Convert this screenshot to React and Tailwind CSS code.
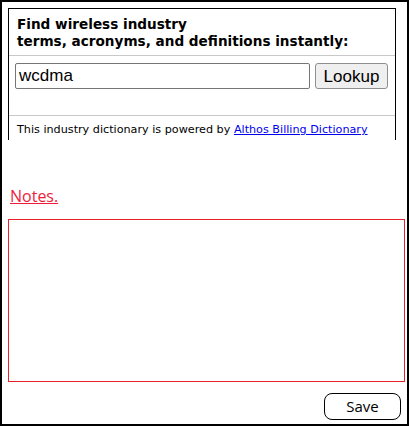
const App = () => {
  return (
    <div className="h-[426px] w-[409px] border-2 border-black bg-white">
      {/* dictionary frame */}
      <div className="ml-[6px] mt-[6px] h-[132px] w-[388px] overflow-hidden">
        <div className="h-[200px] border border-black font-['DejaVu_Sans',sans-serif]">
          <div className="border-b border-[#c8c8c8] px-[8px] pb-[5px] pt-[7px] text-[13.6px] font-bold leading-[17px] text-black">
            Find wireless industry
            <br />
            terms, acronyms, and definitions instantly:
          </div>
          <div className="flex gap-[5px] border-b border-[#c8c8c8] px-[6px] pb-[26px] pt-[7px]">
            <input
              type="text"
              defaultValue="wcdma"
              className="h-[26px] w-[295px] rounded-[2px] border border-[#767676] px-[3px] font-['Liberation_Sans',sans-serif] text-[17px] text-black outline-none"
            />
            <button className="h-[26px] w-[73px] rounded-[3px] border border-[#8f8f8f] bg-[#efefef] font-['Liberation_Sans',sans-serif] text-[17px] text-black">
              Lookup
            </button>
          </div>
          <p className="px-[8px] pt-[6px] text-[11.2px] text-black">
            This industry dictionary is powered by{" "}
            <a href="#" className="text-[#0000ee] underline">
              Althos Billing Dictionary
            </a>
          </p>
        </div>
      </div>

      {/* notes */}
      <div className="ml-[8px] mt-[45px] font-['Open_Sans',sans-serif] text-[16px] leading-[22px] text-[#ee1c3a] underline">
        Notes.
      </div>
      <textarea className="ml-[6px] mt-[12px] block h-[163px] w-[397px] resize-none border border-[#e8202a] outline-none" />
      <div className="mr-[6px] mt-[11px] flex justify-end">
        <button className="h-[27px] w-[77px] rounded-[8px] border border-black bg-white font-['Open_Sans',sans-serif] text-[15px] text-black">
          Save
        </button>
      </div>
    </div>
  );
};

export default App;
